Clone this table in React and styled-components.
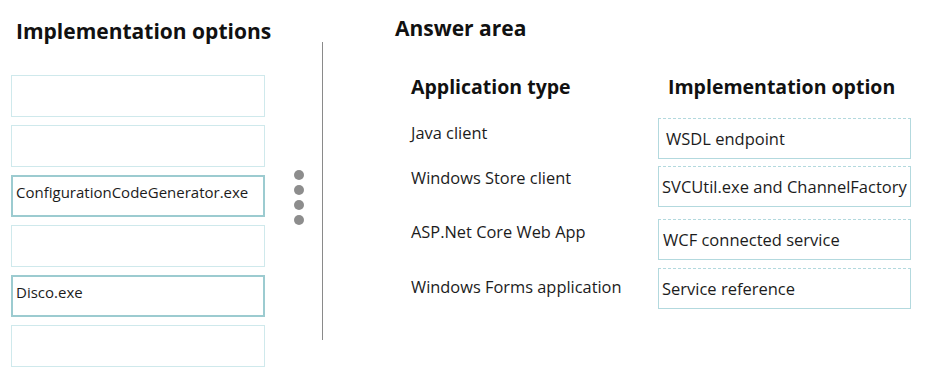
import styled, { createGlobalStyle } from 'styled-components';

const GlobalStyle = createGlobalStyle`
  body {
    margin: 0;
    background: #ffffff;
    font-family: 'Open Sans', 'Noto Sans', sans-serif;
    color: #1c1c1c;
  }
`;

const options = ['', '', 'ConfigurationCodeGenerator.exe', '', 'Disco.exe', ''];

// gapAbove: space over each answer box, labelTop: nudge of the label inside its row
const answers = [
  { app: 'Java client', option: 'WSDL endpoint', gapAbove: 0, labelTop: 4, textPad: 7 },
  { app: 'Windows Store client', option: 'SVCUtil.exe and ChannelFactory', gapAbove: 7, labelTop: 1, textPad: 3 },
  { app: 'ASP.Net Core Web App', option: 'WCF connected service', gapAbove: 12, labelTop: 2, textPad: 4 },
  { app: 'Windows Forms application', option: 'Service reference', gapAbove: 8, labelTop: 8, textPad: 3 },
];

const App = () => {
  return (
    <>
      <GlobalStyle />
      <Page>
        <OptionsPanel>
          <PanelTitle>Implementation options</PanelTitle>
          <OptionList>
            {options.map((text, idx) => (
              <OptionBox key={idx} filled={text !== ''}>
                {text}
              </OptionBox>
            ))}
          </OptionList>
        </OptionsPanel>
        <Handle>
          <Dot />
          <Dot />
          <Dot />
          <Dot />
        </Handle>
        <Divider />
        <AnswerPanel>
          <AreaTitle>Answer area</AreaTitle>
          <AnswerTable>
            <Row>
              <ColumnHead>Application type</ColumnHead>
              <ColumnHead indent={10}>Implementation option</ColumnHead>
            </Row>
            {answers.map((row) => (
              <Row key={row.app} gap={row.gapAbove}>
                <AppLabel offset={row.labelTop}>{row.app}</AppLabel>
                <AnswerBox pad={row.textPad}>{row.option}</AnswerBox>
              </Row>
            ))}
          </AnswerTable>
        </AnswerPanel>
      </Page>
    </>
  );
};

const Page = styled.div`
  display: flex;
  width: 930px;
  height: 382px;
  box-sizing: border-box;
  padding-left: 11px;
`;

const OptionsPanel = styled.div`
  width: 254px;
  display: flex;
  flex-direction: column;
`;

const PanelTitle = styled.h2`
  margin: 16px 0 0 5px;
  font-size: 21px;
  line-height: 30px;
  font-weight: 700;
  color: #111;
  white-space: nowrap;
`;

const OptionList = styled.div`
  margin-top: 29px;
  display: flex;
  flex-direction: column;
  gap: 8px;
`;

const OptionBox = styled.div`
  height: 42px;
  box-sizing: border-box;
  padding: 5px 0 0 3px;
  font-size: 15px;
  line-height: 20px;
  color: #1c1c1c;
  border: ${(p) => (p.filled ? '2px solid #9ccbd0' : '1px solid #cfe9ec')};
`;

const Handle = styled.div`
  margin: 170px 0 0 29px;
  display: flex;
  flex-direction: column;
  gap: 5px;
`;

const Dot = styled.span`
  width: 10px;
  height: 10px;
  border-radius: 50%;
  background: #8d8d8d;
`;

const Divider = styled.div`
  width: 1px;
  height: 298px;
  margin: 42px 0 0 18px;
  background: #8a8a8a;
`;

const AnswerPanel = styled.div`
  margin-left: 72px;
  display: flex;
  flex-direction: column;
`;

const AreaTitle = styled.h2`
  margin: 13px 0 0 0;
  font-size: 21px;
  line-height: 30px;
  font-weight: 700;
  color: #111;
`;

const AnswerTable = styled.div`
  margin: 30px 0 0 16px;
  display: flex;
  flex-direction: column;
`;

const Row = styled.div`
  display: flex;
  margin-top: ${(p) => p.gap || 0}px;
`;

const ColumnHead = styled.div`
  width: ${(p) => (p.indent ? 'auto' : '247px')};
  padding-left: ${(p) => p.indent || 0}px;
  font-size: 19.5px;
  line-height: 28px;
  font-weight: 700;
  color: #111;
  margin-bottom: 17px;
  white-space: nowrap;
`;

const AppLabel = styled.div`
  width: 247px;
  padding-top: ${(p) => p.offset}px;
  font-size: 16.4px;
  line-height: 22px;
  color: #1c1c1c;
  white-space: nowrap;
`;

const AnswerBox = styled.div`
  width: 253px;
  height: 41px;
  box-sizing: border-box;
  display: flex;
  align-items: center;
  padding-left: ${(p) => p.pad}px;
  font-size: 16.5px;
  color: #1c1c1c;
  white-space: nowrap;
  border: 1px solid #b3d9de;
  border-top-style: dashed;
`;

export default App;
